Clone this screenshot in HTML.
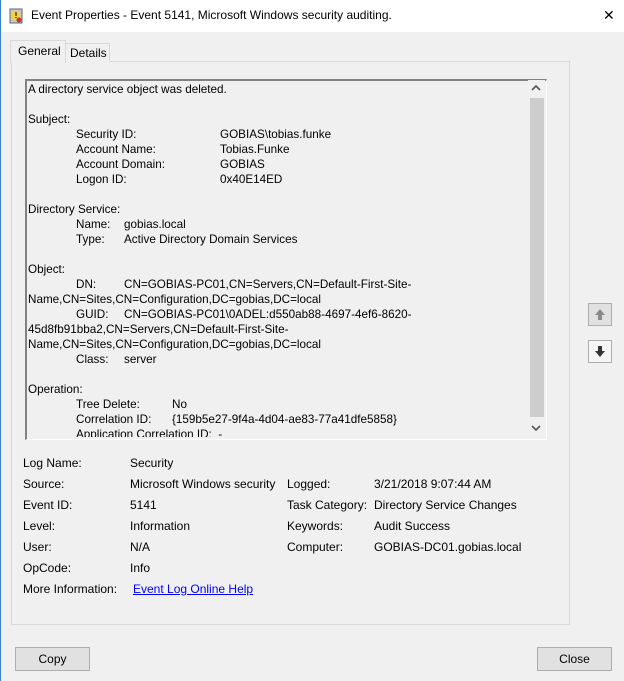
<!DOCTYPE html>
<html><head><style>
body{margin:0;width:624px;height:681px;background:#f0f0f0;font-family:"Liberation Sans",sans-serif;font-size:11.7px;color:#000;position:relative;overflow:hidden}
.a{position:absolute;white-space:nowrap}
#title{position:absolute;left:0;top:0;width:624px;height:32px;background:#fff}
#lb{position:absolute;left:0;top:0;width:1px;height:681px;background:#3c7fd0}
.tab{position:absolute;border:1px solid #d9d9d9;border-bottom:none;background:#f0f0f0}
#panel{position:absolute;left:11px;top:61px;width:557px;height:562px;border:1px solid #d9d9d9;background:#f0f0f0}
#box{position:absolute;left:25px;top:79px;width:519px;height:358px;border-top:2px solid #828282;border-left:2px solid #828282;border-right:1px solid #fff;border-bottom:1px solid #fff;background:#f0f0f0;overflow:hidden}
#sb{position:absolute;left:528px;top:80px;width:17px;height:357px;background:#f0f0f0}
#thumb{position:absolute;left:530px;top:98px;width:14px;height:319px;background:#cdcdcd}
.btn{position:absolute;width:73px;height:22px;border:1px solid #adadad;background:#e1e1e1;text-align:center;line-height:22px;font-size:12px}
.ab{position:absolute;width:22px;height:21px;border:1px solid #adadad;background:#e1e1e1}
</style></head><body>
<div id="title"></div>
<div id="lb"></div>
<svg class="a" style="left:9px;top:8px" width="15" height="16" viewBox="0 0 15 16"><rect x="1" y="1" width="12" height="14" fill="#c9c9c9" stroke="#666"/><rect x="3" y="3" width="8" height="8" fill="#f4d03f"/><path d="M7 4v4M7 9v1" stroke="#000"/><circle cx="10" cy="12" r="2.5" fill="#c0392b"/></svg>
<div class="a" style="left:31px;top:8px;font-size:12px">Event Properties - Event 5141, Microsoft Windows security auditing.</div>
<div class="a" style="left:603px;top:7px;font-size:14px;color:#000">✕</div>
<div id="panel"></div>
<div class="tab" style="left:65px;top:43px;width:43px;height:18px"></div>
<div class="a" style="left:70px;top:46px;font-size:12px">Details</div>
<div class="tab" style="left:10px;top:40px;width:54px;height:22px;border-color:#d9d9d9"></div>
<div class="a" style="left:18px;top:44px;font-size:12px">General</div>
<div id="box"></div>
<div id="sb"></div><div id="thumb"></div>
<svg class="a" style="left:531px;top:84px" width="10" height="8"><path d="M1 6l4-4 4 4" fill="none" stroke="#555" stroke-width="1.6"/></svg>
<svg class="a" style="left:531px;top:424px" width="10" height="8"><path d="M1 2l4 4 4-4" fill="none" stroke="#555" stroke-width="1.6"/></svg>
<div id="t">
<div class="a" style="left:28px;top:83px">A directory service object was deleted.</div>
<div class="a" style="left:28px;top:113px">Subject:</div>
<div class="a" style="left:76px;top:128px">Security ID:</div><div class="a" style="left:220px;top:128px">GOBIAS\tobias.funke</div>
<div class="a" style="left:76px;top:143px">Account Name:</div><div class="a" style="left:220px;top:143px">Tobias.Funke</div>
<div class="a" style="left:76px;top:158px">Account Domain:</div><div class="a" style="left:220px;top:158px">GOBIAS</div>
<div class="a" style="left:76px;top:173px">Logon ID:</div><div class="a" style="left:220px;top:173px">0x40E14ED</div>
<div class="a" style="left:28px;top:203px">Directory Service:</div>
<div class="a" style="left:76px;top:218px">Name:</div><div class="a" style="left:124px;top:218px">gobias.local</div>
<div class="a" style="left:76px;top:233px">Type:</div><div class="a" style="left:124px;top:233px">Active Directory Domain Services</div>
<div class="a" style="left:28px;top:263px">Object:</div>
<div class="a" style="left:76px;top:278px">DN:</div><div class="a" style="left:124px;top:278px">CN=GOBIAS-PC01,CN=Servers,CN=Default-First-Site-</div>
<div class="a" style="left:28px;top:293px">Name,CN=Sites,CN=Configuration,DC=gobias,DC=local</div>
<div class="a" style="left:76px;top:308px">GUID:</div><div class="a" style="left:124px;top:308px">CN=GOBIAS-PC01\0ADEL:d550ab88-4697-4ef6-8620-</div>
<div class="a" style="left:28px;top:323px">45d8fb91bba2,CN=Servers,CN=Default-First-Site-</div>
<div class="a" style="left:28px;top:338px">Name,CN=Sites,CN=Configuration,DC=gobias,DC=local</div>
<div class="a" style="left:76px;top:353px">Class:</div><div class="a" style="left:124px;top:353px">server</div>
<div class="a" style="left:28px;top:383px">Operation:</div>
<div class="a" style="left:76px;top:398px">Tree Delete:</div><div class="a" style="left:172px;top:398px">No</div>
<div class="a" style="left:76px;top:413px">Correlation ID:</div><div class="a" style="left:172px;top:413px">{159b5e27-9f4a-4d04-ae83-77a41dfe5858}</div>
<div class="a" style="left:76px;top:428px;clip-path:inset(0 0 4px 0)">Application Correlation ID:&nbsp;&nbsp;-</div>
</div>
<div class="ab" style="left:588px;top:303px"><svg width="22" height="21"><path d="M11 5l-5 6h3v5h4v-5h3z" fill="#8a8a8a"/></svg></div>
<div class="ab" style="left:588px;top:340px;background:#f5f5f5"><svg width="22" height="21"><path d="M11 16l-5-6h3v-5h4v5h3z" fill="#333"/></svg></div>
<div style="font-size:12px">
<div class="a" style="left:23px;top:456px">Log Name:</div><div class="a" style="left:130px;top:456px">Security</div>
<div class="a" style="left:23px;top:477px">Source:</div><div class="a" style="left:130px;top:477px">Microsoft Windows security</div>
<div class="a" style="left:287px;top:477px">Logged:</div><div class="a" style="left:374px;top:477px">3/21/2018 9:07:44 AM</div>
<div class="a" style="left:23px;top:498px">Event ID:</div><div class="a" style="left:130px;top:498px">5141</div>
<div class="a" style="left:287px;top:498px">Task Category:</div><div class="a" style="left:374px;top:498px">Directory Service Changes</div>
<div class="a" style="left:23px;top:519px">Level:</div><div class="a" style="left:130px;top:519px">Information</div>
<div class="a" style="left:287px;top:519px">Keywords:</div><div class="a" style="left:374px;top:519px">Audit Success</div>
<div class="a" style="left:23px;top:540px">User:</div><div class="a" style="left:130px;top:540px">N/A</div>
<div class="a" style="left:287px;top:540px">Computer:</div><div class="a" style="left:374px;top:540px">GOBIAS-DC01.gobias.local</div>
<div class="a" style="left:23px;top:561px">OpCode:</div><div class="a" style="left:130px;top:561px">Info</div>
<div class="a" style="left:23px;top:582px">More Information:</div><div class="a" style="left:133px;top:582px;color:#0000ff;text-decoration:underline">Event Log Online Help</div>
</div>
<div class="btn" style="left:15px;top:647px">Copy</div>
<div class="btn" style="left:537px;top:647px">Close</div>
</body></html>
